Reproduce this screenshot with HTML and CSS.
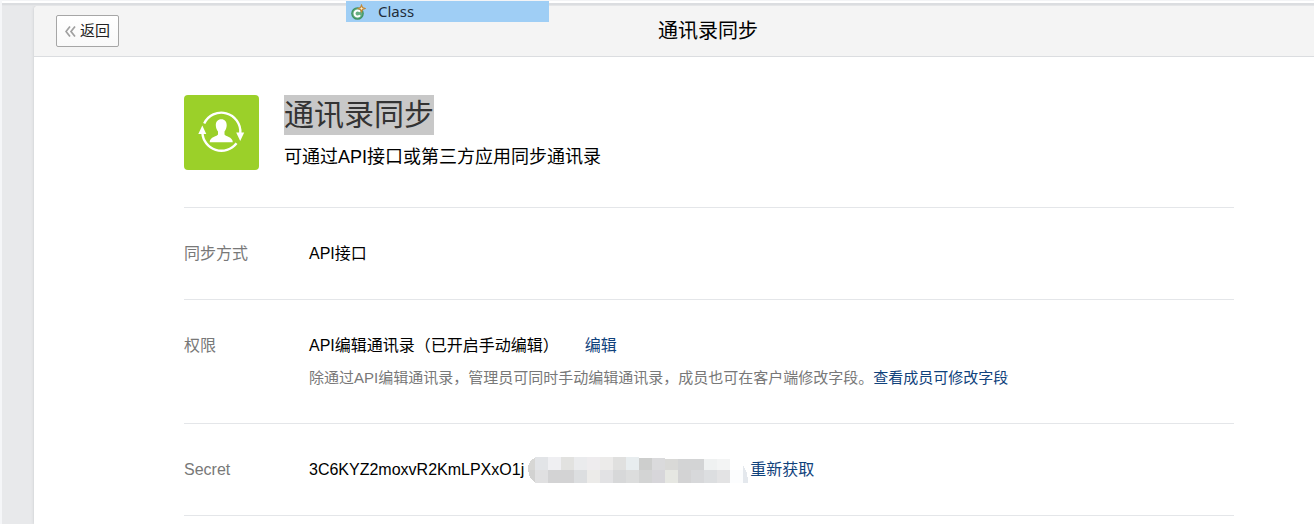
FILE: index.html
```html
<!DOCTYPE html>
<html lang="zh-CN">
<head>
<meta charset="utf-8">
<title>通讯录同步</title>
<link rel="stylesheet" href="styles.css">
</head>
<body>
<div class="topline"></div>
<div class="drag-tip">
  <svg class="class-icon" width="16" height="16" viewBox="0 0 16 16" aria-hidden="true">
    <circle cx="7.500" cy="9.500" r="6.300" fill="#3f9363"/>
    <circle cx="7.500" cy="9.500" r="5" fill="#67ae83"/>
    <path d="M10 7.800A3 3 0 1 0 10 11.200" fill="none" stroke="#fff" stroke-width="2"/>
    <path d="M11.500 1.200l1 2.300 2.300 1-2.300 1-1 2.300-1-2.300-2.300-1 2.300-1z" fill="#fff1cf" stroke="#c18a3c" stroke-width="1.200"/>
  </svg>
  <span>Class</span>
</div>
<main class="panel">
  <header class="bar">
    <button class="back" type="button">
      <svg width="11" height="11" viewBox="0 0 11 11" aria-hidden="true"><path d="M5 .5L1 5.500l4 5M10 .5l-4 5 4 5" fill="none" stroke="#a0a0a0" stroke-width="1.700"/></svg>
      返回
    </button>
    <div class="bar-title">通讯录同步</div>
  </header>
  <div class="content">
    <section class="intro">
      <svg class="app-icon" width="75" height="75" viewBox="0 0 75 75" aria-hidden="true">
        <rect width="75" height="75" rx="4" fill="#9bd029"/>
        <g fill="none" stroke="#fff" stroke-width="2.400">
          <path d="M20.200 28.500A19 19 0 0 1 56.300 38"/>
          <path d="M18.400 37.500A19 19 0 0 0 52.500 48.300"/>
        </g>
        <path d="M18.300 30.500l4 8.500h-8zM56.200 46l-4-8.500h8z" fill="#fff"/>
        <path d="M37.300 24.300c3.500 0 5.400 2.400 5.400 5.900 0 2.500-1 4.800-2.200 6.200v3.200c.4 1.700 8.300 2.200 8.300 7.700H25.700c0-5.500 7.900-6 8.300-7.700v-3.200c-1.200-1.400-2.200-3.700-2.200-6.200 0-3.500 2-5.900 5.500-5.900z" fill="#fff"/>
      </svg>
      <div>
        <h1 class="title"><span class="selected">通讯录同步</span></h1>
        <p class="subtitle">可通过API接口或第三方应用同步通讯录</p>
      </div>
    </section>
    <dl class="rows">
      <div class="row">
        <dt>同步方式</dt>
        <dd>API接口</dd>
      </div>
      <div class="row">
        <dt>权限</dt>
        <dd>
          <div class="line">API编辑通讯录（已开启手动编辑）<a class="edit" href="#">编辑</a></div>
          <p class="note">除通过API编辑通讯录，管理员可同时手动编辑通讯录，成员也可在客户端修改字段。<a href="#">查看成员可修改字段</a></p>
        </dd>
      </div>
      <div class="row">
        <dt>Secret</dt>
        <dd class="secret">
          <span>3C6KYZ2moxvR2KmLPXxO1j</span>
          <svg class="mask" width="221" height="26" viewBox="0 0 221 26" shape-rendering="crispEdges" aria-hidden="true">
            <path d="M8 0Q0 4 0 12V13H8z" fill="#d7d7d5"/><path d="M0 13Q1 22 8 26V13z" fill="#d2d2d1"/>
            <path d="M7 0h13v13H7z" fill="#e2e4e7"/><path d="M20 0h13v13H20z" fill="#efeff2"/><path d="M33 0h13v13H33z" fill="#e2e2e0"/><path d="M46 0h13v13H46z" fill="#eaebed"/><path d="M59 0h13v13H59z" fill="#eeecee"/><path d="M72 0h13v13H72z" fill="#ecebea"/><path d="M85 0h13v13H85z" fill="#e0e0df"/><path d="M98 0h13v13H98z" fill="#e8edef"/><path d="M111 1h13v12H111z" fill="#cdcecd"/><path d="M124 1h13v12H124z" fill="#dadadc"/><path d="M137 2h13v11H137z" fill="#d9d9d7"/><path d="M150 2h26v11H150z" fill="#d3d4d5"/><path d="M176 2h13v11H176z" fill="#eff1f1"/><path d="M189 2h13v11H189z" fill="#f3f4f4"/>
            <path d="M7 13h13v13H7z" fill="#e0e0e1"/><path d="M20 13h26v13H20z" fill="#d3d3d4"/><path d="M46 13h13v13H46z" fill="#dcdee0"/><path d="M59 13h13v13H59z" fill="#ecebe9"/><path d="M72 13h13v13H72z" fill="#e2e2e4"/><path d="M85 13h13v13H85z" fill="#d7d8d9"/><path d="M98 13h13v13H98z" fill="#dcdddd"/><path d="M111 13h13v13H111z" fill="#d3d4d4"/><path d="M124 13h13v13H124z" fill="#d7d6da"/><path d="M137 13h13v13H137z" fill="#e6e7e2"/><path d="M150 13h13v13H150z" fill="#d3d3d4"/><path d="M163 13h13v13H163z" fill="#d7d8da"/><path d="M176 13h13v13H176z" fill="#dcdee0"/><path d="M189 13h13v13H189z" fill="#e3e3e4"/>
            <path d="M202 13h13v13H202z" fill="#fcfdfe"/><path d="M215 8q5 7 5 18h-5z" fill="#e4e8ed"/>
          </svg>
          <a href="#">重新获取</a>
        </dd>
      </div>
    </dl>
  </div>
</main>
</body>
</html>
```
FILE: styles.css
```css
* { box-sizing: border-box; }

body {
  margin: 0;
  min-height: 100vh;
  background: #e8e9eb;
  border-left: 2px solid #f5f6f8;
  color: #000;
  font: 16px/32px "Liberation Sans", "Noto Sans CJK SC", sans-serif;
  display: flex;
  flex-direction: column;
}

h1, p, dl, dd { margin: 0; }

a { color: #10427c; text-decoration: none; }

.topline {
  height: 6px;
  background: linear-gradient(#f3f4f6 1px, #fff 1px, #fff 3px, #dbdde0 3px, #dbdde0 5px, #e4e5e7 5px);
}

.drag-tip {
  position: absolute;
  z-index: 1;
  left: 346px;
  top: 1px;
  width: 203px;
  height: 21px;
  padding-left: 4px;
  display: flex;
  align-items: center;
  gap: 12px;
  background: #9fcef5;
  color: #222c3a;
  font: 15px/21px "Noto Sans", sans-serif;
}

.panel {
  flex: 1;
  margin-left: 32px;
  background: #fff;
  border-radius: 4px 0 0 0;
  box-shadow: 0 0 3px #c4c6c9;
  clip-path: inset(0 0 0 -4px);
}

.bar {
  display: flex;
  align-items: center;
  height: 51px;
  padding: 0 17px 0 22px;
  background: #f4f4f4;
  border-bottom: 1px solid #dbdde0;
  border-radius: 4px 0 0 0;
}

.back {
  display: flex;
  align-items: center;
  justify-content: center;
  gap: 4px;
  width: 63px;
  height: 32px;
  padding: 0;
  border: 1px solid #a6a6a6;
  border-radius: 2px;
  background: linear-gradient(#fff, #f9f9f9);
  color: #222;
  font: 15px/30px "Liberation Sans", "Noto Sans CJK SC", sans-serif;
}

.bar-title {
  flex: 1;
  text-align: center;
  font-size: 20px;
}

.content { padding: 38px 80px 0 150px; }

.intro {
  display: flex;
  gap: 25px;
  padding-bottom: 37px;
  border-bottom: 1px solid #e4e6e9;
}

.app-icon { flex: none; }

.title {
  font-size: 30px;
  font-weight: 400;
  line-height: 40px;
  color: #333;
}

.selected { display: inline-block; background: #c8c8c8; }

.subtitle { font-size: 18px; line-height: 24px; padding-top: 10px; }

.row {
  display: flex;
  padding: 30px 0 29px;
  border-bottom: 1px solid #e4e6e9;
}

dt { flex: none; width: 125px; color: #787878; }

dd { flex: 1; }

.edit { margin-left: 26px; }

.note { font-size: 15px; color: #787878; }

.secret { display: flex; align-items: center; }

.mask { flex: none; margin: 0 1px 0 4px; }
```
